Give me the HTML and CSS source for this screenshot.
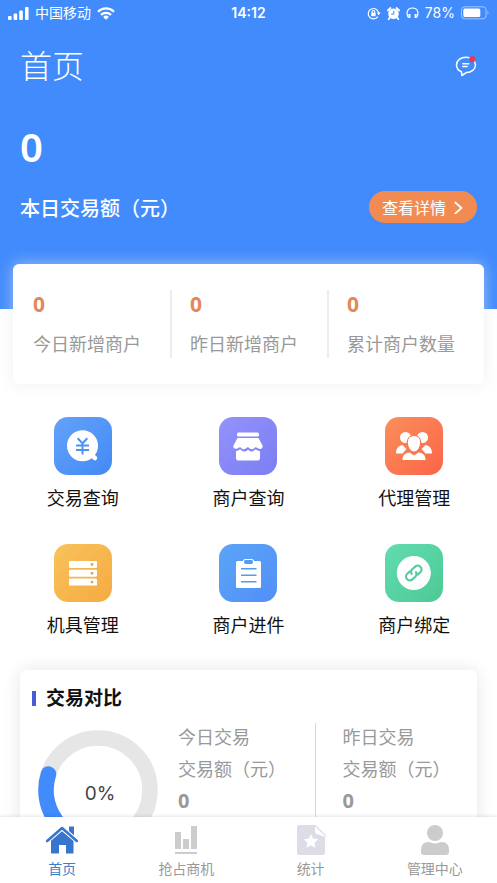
FILE: index.html
```html
<!DOCTYPE html>
<html lang="zh-CN">
<head>
<meta charset="utf-8">
<meta name="viewport" content="width=device-width, initial-scale=1">
<title>首页</title>
<link rel="stylesheet" href="styles.css">
</head>
<body>
<main class="content">
  <header class="hero">
    <div class="status">
      <div class="status-side">
        <svg width="21" height="13" viewBox="0 0 21 13" fill="#fff" aria-hidden="true"><rect x="0" y="9" width="3.6" height="4" rx="1"/><rect x="5.6" y="6.5" width="3.6" height="6.5" rx="1"/><rect x="11.2" y="3.5" width="3.6" height="9.5" rx="1"/><rect x="17" y="0" width="3.6" height="13" rx="1"/></svg>
        <span class="carrier">中国移动</span>
        <svg width="18" height="13" viewBox="0 0 18 13" fill="none" stroke="#fff" stroke-width="2.3" aria-hidden="true"><path d="M1 4.700a11.400 11.400 0 0 1 16 0M4 7.900a7.200 7.200 0 0 1 10 0"/><path d="M9 12.800 6.100 10a4.200 4.200 0 0 1 5.800 0z" fill="#fff" stroke="none"/></svg>
      </div>
      <time class="clock">14:12</time>
      <div class="status-side status-right">
        <svg width="14" height="13" viewBox="0 0 14 13" fill="none" stroke="#fff" stroke-width="1.2" aria-hidden="true"><path d="M10.800 9.600A5.200 5.200 0 1 1 11.600 6"/><path d="M9.800 5.600h3.800l-1.900 2.600z" fill="#fff" stroke="none"/><rect x="4.200" y="5.800" width="4.400" height="3.400" fill="#fff" stroke="none"/><path d="M5.100 6V4.800a1.300 1.300 0 0 1 2.600 0V6"/></svg>
        <svg width="13" height="13" viewBox="0 0 13 13" aria-hidden="true"><circle cx="6.500" cy="6.800" r="5.300" fill="#fff"/><path d="M.8 3.500 3.500 1M12.200 3.500 9.500 1M2.800 10.500 1.600 12.200M10.200 10.500l1.200 1.700" stroke="#fff" stroke-width="1.800" stroke-linecap="round"/><path d="M6.800 3.800v3.400H4.200" fill="none" stroke="#418bfd" stroke-width="1"/></svg>
        <svg width="13" height="12" viewBox="0 0 13 12" fill="none" stroke="#fff" aria-hidden="true"><path d="M2.400 10.500C.2 7.500.4 1 6.500 1s6.300 6.500 4.100 9.500" stroke-width="1.200"/><path d="M3.400 7v4M9.600 7v4" stroke-width="2"/></svg>
        <span class="percent">78%</span>
        <svg width="28" height="14" viewBox="0 0 28 14" aria-hidden="true"><rect x=".5" y=".8" width="24.5" height="12" rx="3" fill="none" stroke="#a3c7ff"/><rect x="2.300" y="2.600" width="17" height="8.400" rx="1.500" fill="#fff"/><path d="M26.500 4.800q2 2 0 4z" fill="#a3c7ff"/></svg>
      </div>
    </div>
    <div class="title-row">
      <h1>首页</h1>
      <button class="message" aria-label="消息">
        <svg width="22" height="22" viewBox="0 0 22 22" fill="none" stroke="#fff" stroke-width="1.500" stroke-linecap="round" stroke-linejoin="round"><path d="M6.500 16.800C3.500 15.600 1.500 13 1.500 10c0-4.500 4.200-7.800 9.500-7.800s9.500 3.300 9.500 7.700-4.200 7.600-9 7.600L6.800 20.500z"/><path d="M7.800 8.700h6M7.800 11.500h4.400"/><circle cx="17.300" cy="4.200" r="3.100" fill="#df3f56" stroke="none"/></svg>
      </button>
    </div>
    <p class="total">0</p>
    <div class="amount-row">
      <p class="amount-label">本日交易额（元）</p>
      <button class="detail">查看详情
        <svg width="9" height="14" viewBox="0 0 9 14" fill="none" stroke="#fff" stroke-width="1.700" stroke-linecap="round" stroke-linejoin="round" aria-hidden="true"><path d="M1.300 2.500 7.500 8l-6.200 5.500"/></svg>
      </button>
    </div>
  </header>

  <section class="stats">
    <div class="stat"><b>0</b><span>今日新增商户</span></div>
    <div class="stat"><b>0</b><span>昨日新增商户</span></div>
    <div class="stat"><b>0</b><span>累计商户数量</span></div>
  </section>

  <section class="menu">
    <a class="entry" href="#trade">
      <svg class="tile blue" viewBox="0 0 58 58" aria-hidden="true"><circle cx="28.500" cy="28.800" r="15.500" fill="#fff"/><path d="M38 38.500l3 2.500" stroke="#fff" stroke-width="4.500" stroke-linecap="round"/><path d="m23.700 21.300 4.800 5.200 4.800-5.200M28.500 26.500v11M22 28.500h13M22 33h13" fill="none" stroke="#4c91f7" stroke-width="2"/></svg>
      <span>交易查询</span>
    </a>
    <a class="entry" href="#merchant">
      <svg class="tile violet" viewBox="0 0 58 58" fill="#fff" aria-hidden="true"><rect x="18" y="15.500" width="22" height="4" rx="1.500"/><path d="M18.500 21h21l4 7.500c.8 2.500-1.400 4-3.200 3.300-1.600 0-2.400-1.500-3.500-1.500-1.300 0-1.700 2-4 2-2 0-2.600-2-4-2s-2 2-4 2c-2.200 0-2.600-2-4-2-1.100 0-2 1.600-3.500 1.500-2 .4-3.600-1.200-2.800-3.300z"/><path d="M17 34c2 .4 3-1.500 4-1.500s2 2 4.500 2 2.600-1.800 3.500-1.800 1.500 1.800 3.500 1.800c2.300 0 3.300-2 4.300-2s2 1.900 4.200 1.500v7.500q0 2-2 2H19q-2 0-2-2z"/></svg>
      <span>商户查询</span>
    </a>
    <a class="entry" href="#agent">
      <svg class="tile orange" viewBox="0 0 58 58" fill="#fff" aria-hidden="true"><circle cx="20.500" cy="20.500" r="5.500"/><circle cx="37.500" cy="20.500" r="5.500"/><path d="M11 36.500c0-5 2-7.500 6.500-8.500l4 4-4 4.500zM47 36.500c0-5-2-7.500-6.500-8.500l-4 4 4 4.500z"/><path d="M17 43.500c0-5 2-7.800 7.500-8.500l4.500 3 4.500-3c5.500.7 7.500 3.500 7.500 8.500z" stroke="#fa764f" stroke-width="1"/><path d="M29 18.500c4 0 6.700 2.800 6.700 6.800 0 5-2.700 9.700-6.700 9.700s-6.700-4.700-6.700-9.700c0-4 2.700-6.800 6.700-6.800z" stroke="#fa764f" stroke-width="1.200"/></svg>
      <span>代理管理</span>
    </a>
    <a class="entry" href="#device">
      <svg class="tile yellow" viewBox="0 0 58 58" aria-hidden="true"><g fill="#fff"><rect x="15" y="17" width="28" height="7" rx="1.200"/><rect x="15" y="25.800" width="28" height="7" rx="1.200"/><rect x="15" y="34.600" width="28" height="7" rx="1.200"/></g><g fill="#d8a95b"><circle cx="38" cy="20.500" r="1.400"/><circle cx="38" cy="29.300" r="1.400"/><circle cx="38" cy="38.100" r="1.400"/></g></svg>
      <span>机具管理</span>
    </a>
    <a class="entry" href="#apply">
      <svg class="tile sky" viewBox="0 0 58 58" aria-hidden="true"><rect x="17" y="17" width="25" height="27" rx="1.500" fill="#fff"/><rect x="24.500" y="15.500" width="10" height="5" rx="2" fill="#559bf2" stroke="#fff" stroke-width="1.200"/><path d="M22 24.800h15.500M22 31.300h15.500M22 37.800h15.500" stroke="#559bf2" stroke-width="1.500"/></svg>
      <span>商户进件</span>
    </a>
    <a class="entry" href="#bind">
      <svg class="tile green" viewBox="0 0 58 58" aria-hidden="true"><circle cx="28.800" cy="29" r="17" fill="#fff"/><g transform="rotate(-42 28.800 29)" fill="none" stroke="#58caa0" stroke-width="2.100" stroke-linecap="round"><path d="M27 25.200H23.500a3.800 3.800 0 0 0 0 7.600h4a3.600 3.600 0 0 0 3.500-3"/><path d="M30.600 32.800h3.500a3.800 3.800 0 0 0 0-7.600h-4a3.600 3.600 0 0 0-3.500 3"/></g></svg>
      <span>商户绑定</span>
    </a>
  </section>

  <section class="compare">
    <h2>交易对比</h2>
    <div class="compare-body">
      <div class="ring">
        <svg viewBox="0 0 120 120" fill="none" stroke-width="15.500" aria-hidden="true"><circle cx="60" cy="60" r="52" stroke="#e6e6e6"/><path d="M10.500 44A52 52 0 0 0 60 112" stroke="#418bfd" stroke-linecap="round"/></svg>
        <span class="ring-value">0%</span>
      </div>
      <div class="period"><span>今日交易</span><span>交易额（元）</span><b>0</b></div>
      <div class="period"><span>昨日交易</span><span>交易额（元）</span><b>0</b></div>
    </div>
  </section>
</main>

<nav class="tabs">
  <a class="tab active" href="#home" aria-current="page">
    <svg width="34" height="32" viewBox="0 0 34 32" aria-hidden="true"><path d="M24 2.500h5V14l-5-4.500z" fill="#3875cd"/><path d="M6 16.500 17 7l11.500 9.500V29.500H21v-8.500h-7v8.500H6z" fill="#3875cd"/><path d="M2 17 17 4l15 13" fill="none" stroke="#fff" stroke-width="4.600"/><path d="M2.200 17 17 4l14.800 13" fill="none" stroke="#3875cd" stroke-width="2.600" stroke-linejoin="round" stroke-linecap="round"/></svg>
    <span>首页</span>
  </a>
  <a class="tab" href="#chance">
    <svg width="34" height="32" viewBox="0 0 34 32" fill="#ccc" aria-hidden="true"><path d="M6 8h6v17H6zM14 15h6v10h-6zM22 2h6v23h-6zM6 28h22v2H6z"/></svg>
    <span>抢占商机</span>
  </a>
  <a class="tab" href="#report">
    <svg width="34" height="32" viewBox="0 0 34 32" aria-hidden="true"><path d="M5 1h16v6q0 3.500 3.500 3.500L31 13v16q0 2-2 2H5q-2 0-2-2V3q0-2 2-2z" fill="#dddde8"/><path d="M22.500 2 30.500 10H25q-2.500 0-2.500-2.500z" fill="#fff"/><path d="M21 1.500 31 11v2" fill="none" stroke="#dddde8" stroke-width="1.300"/><path d="m17 10 2.200 4.600 5 .7-3.600 3.500.9 5-4.500-2.400-4.500 2.400.9-5-3.600-3.500 5-.7z" fill="#fff"/></svg>
    <span>统计</span>
  </a>
  <a class="tab" href="#center">
    <svg width="34" height="32" viewBox="0 0 34 32" fill="#ccc" aria-hidden="true"><circle cx="17" cy="9" r="8"/><path d="M9 18q3 0 4.500.8 3.500 1.200 7 0Q22 18 25 18q6 1 6 8v2q0 3-3 3H6q-3 0-3-3v-2q0-7 6-8z"/></svg>
    <span>管理中心</span>
  </a>
</nav>
</body>
</html>
```
FILE: styles.css
```css
* {
  box-sizing: border-box;
  margin: 0;
}

body {
  display: flex;
  flex-direction: column;
  height: 100vh;
  background: #fff;
  color: #111;
  font-family: "Noto Sans", "Noto Sans CJK SC", sans-serif;
  font-size: 18px;
}

a {
  color: inherit;
  text-decoration: none;
}

button {
  border: 0;
  padding: 0;
  background: none;
  color: #fff;
  font-family: inherit;
}

svg {
  display: block;
  flex: none;
}

.content {
  flex: 1;
  min-height: 0;
  overflow-y: auto;
  scrollbar-width: none;
}

.hero {
  padding-bottom: 86px;
  background: #418bfd;
  color: #fff;
}

.status {
  display: grid;
  grid-template-columns: 1fr auto 1fr;
  align-items: center;
  height: 26px;
  padding: 0 8px;
  font-family: Inter, "Noto Sans CJK SC", sans-serif;
  font-size: 14px;
  line-height: 20px;
}

.status-side {
  display: flex;
  align-items: center;
  gap: 6px;
}

.status-right {
  justify-content: flex-end;
}

.clock {
  font-weight: 600;
}

.title-row,
.amount-row {
  display: flex;
  align-items: center;
  justify-content: space-between;
  padding: 0 20px;
}

.title-row {
  height: 80px;
}

h1 {
  font-size: 32px;
  font-weight: 300;
  line-height: 48px;
}

.total {
  padding: 0 20px;
  margin: 16px 0 19px;
  font-size: 40px;
  font-weight: 600;
  line-height: 50px;
}

.amount-row {
  height: 32px;
}

.amount-label {
  font-size: 20px;
  font-weight: 500;
}

.detail {
  display: flex;
  align-items: center;
  gap: 8px;
  height: 32px;
  padding: 0 14px 0 13px;
  border-radius: 16px;
  background: #f18b52;
  font-size: 16px;
}

.stats {
  position: relative;
  display: grid;
  grid-template-columns: repeat(3, 1fr);
  height: 120px;
  margin: -45px 13px 0;
  padding: 26px 0;
  border-radius: 6px;
  background: #fff;
  box-shadow: 0 0 16px rgba(225, 228, 235, 0.6);
}

.stat {
  display: flex;
  flex-direction: column;
  gap: 12px;
  padding-left: 20px;
  color: #999;
}

.stat + .stat {
  padding-left: 18px;
  border-left: 2px solid #ececec;
}

.stat b {
  color: #e2885a;
  font-size: 21px;
  line-height: 28px;
}

.stat span {
  line-height: 28px;
}

.menu {
  display: grid;
  grid-template-columns: repeat(3, 1fr);
  row-gap: 32px;
  margin-top: 33px;
}

.entry {
  display: flex;
  flex-direction: column;
  align-items: center;
  gap: 9px;
  line-height: 28px;
}

.tile {
  width: 58px;
  height: 58px;
  border-radius: 14px;
}

.blue {
  background: linear-gradient(135deg, #64a2fa, #428af5);
}

.violet {
  background: linear-gradient(135deg, #9393fb, #7b7df3);
}

.orange {
  background: linear-gradient(135deg, #fb8e5b, #fa6548);
}

.yellow {
  background: linear-gradient(135deg, #f8c35b, #f6aa42);
}

.sky {
  background: linear-gradient(135deg, #5ba5f8, #528ff7);
}

.green {
  background: linear-gradient(135deg, #62dcaf, #4dc995);
}

.compare {
  margin: 31px 20px 20px;
  padding: 14px 0 20px 12px;
  border-radius: 6px;
  box-shadow: 0 0 18px rgba(0, 0, 0, 0.1);
}

h2 {
  display: flex;
  align-items: center;
  gap: 10px;
  font-size: 19px;
  line-height: 28px;
}

h2::before {
  content: "";
  width: 4px;
  height: 15px;
  background: #4b5bd8;
}

.compare-body {
  display: grid;
  grid-template-columns: 120px 1fr 1fr;
  margin: 11px 0 0 6px;
  padding-right: 6px;
}

.ring {
  position: relative;
  margin-top: 7px;
}

.ring-value {
  position: absolute;
  inset: 0;
  display: grid;
  place-items: center;
  padding: 6px 0 0 4px;
  color: #444;
  font-family: Inter, sans-serif;
  font-size: 19px;
}

.period {
  display: flex;
  flex-direction: column;
  gap: 4px;
  padding-left: 20px;
  color: #999;
  line-height: 28px;
}

.period + .period {
  padding-left: 27px;
  border-left: 1px solid #d8d8d8;
}

.period b {
  font-size: 20px;
}

.tabs {
  position: relative;
  display: grid;
  grid-template-columns: repeat(4, 1fr);
  height: 66px;
  background: #fff;
  box-shadow: 0 -1px 3px rgba(0, 0, 0, 0.1);
}

.tab {
  display: flex;
  flex-direction: column;
  align-items: center;
  gap: 2px;
  padding-top: 7px;
  color: #999;
  font-size: 14px;
  line-height: 22px;
}

.active {
  color: #3f7fca;
}
```
